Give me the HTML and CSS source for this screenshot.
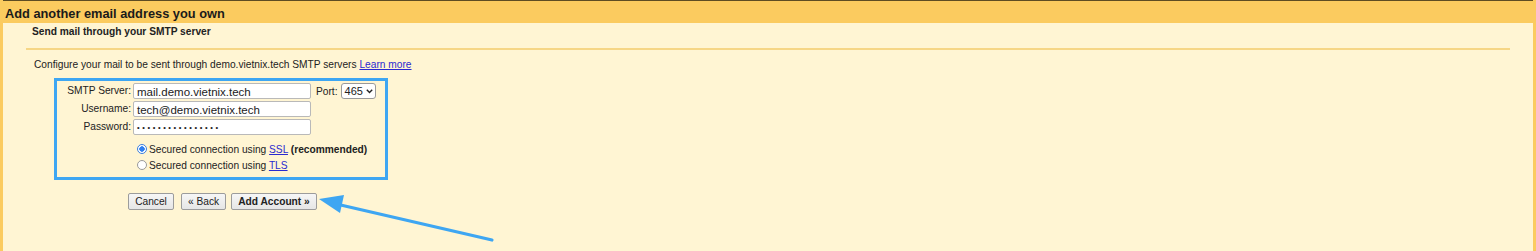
FILE: index.html
```html
<!DOCTYPE html>
<html>
<head>
<meta charset="utf-8">
<link rel="stylesheet" href="styles.css">
</head>
<body>
<div class="page">
  <div class="header">Add another email address you own</div>
  <div class="content">
    <div class="section-title">Send mail through your SMTP server</div>
    <div class="rule"></div>
    <div class="intro">Configure your mail to be sent through demo.vietnix.tech SMTP servers <a href="#" class="link">Learn more</a></div>
    <div class="highlight">
      <div class="form">
        <label class="lbl">SMTP Server:</label>
        <div class="row">
          <div class="input">mail.demo.vietnix.tech</div>
          <span class="port-lbl">Port:</span>
          <div class="select">465<svg class="chev" width="7" height="5" viewBox="0 0 7 5"><path d="M0.8 0.8 L3.5 3.6 L6.2 0.8" fill="none" stroke="#222" stroke-width="1.4"/></svg></div>
        </div>
        <label class="lbl">Username:</label>
        <div class="row"><div class="input">tech@demo.vietnix.tech</div></div>
        <label class="lbl">Password:</label>
        <div class="row"><div class="input pw">••••••••••••••••</div></div>
        <div></div>
        <div class="radios">
          <div class="radio-row"><span class="radio checked"></span><span class="rtext">Secured connection using <a href="#" class="link">SSL</a> <b>(recommended)</b></span></div>
          <div class="radio-row"><span class="radio"></span><span class="rtext">Secured connection using <a href="#" class="link">TLS</a></span></div>
        </div>
      </div>
    </div>
    <div class="buttons">
      <button class="btn">Cancel</button>
      <button class="btn back">« Back</button>
      <button class="btn strong">Add Account »</button>
    </div>
  </div>
  <svg class="arrow" width="200" height="60" viewBox="300 190 200 60">
    <line x1="492" y1="240" x2="332" y2="203" stroke="#3ea6f2" stroke-width="3.2" stroke-linecap="round"/>
    <polygon points="319,199 344,195 340,213" fill="#3ea6f2"/>
  </svg>
</div>
</body>
</html>
```
FILE: styles.css
```css
* { box-sizing: border-box; }
html, body { margin: 0; padding: 0; }
body {
  background: #fff5d3;
  font-family: "Liberation Sans", Arial, sans-serif;
  color: #222;
  font-size: 10px;
}
.page {
  position: relative;
  height: 251px;
  border-left: 3px solid #fbcb5f;
  border-right: 3px solid #fbcb5f;
  background: #fff5d3;
  overflow: hidden;
}
.header {
  height: 23px;
  background: #fbcb5f;
  border-top: 1px solid #5e4c22;
  padding: 6px 0 0 2px;
  font-weight: bold;
  font-size: 12.8px;
  line-height: 14px;
  color: #1a1a1a;
}
.content {
  padding-left: 23px;
}
.section-title {
  font-weight: bold;
  font-size: 10.2px;
  line-height: 12px;
  padding: 3px 0 0 6px;
  height: 25px;
}
.rule {
  width: 1484px;
  height: 2px;
  background: #f6d685;
}
.intro {
  padding: 9px 0 0 8px;
  height: 28px;
  font-size: 10.2px;
  line-height: 12px;
}
.link { color: #2a2ad0; text-decoration: underline; }
.highlight {
  margin-left: 28px;
  width: 334px;
  height: 102px;
  border: 3px solid #3ea6f2;
  padding: 2px 0 0 0;
}
.form {
  display: grid;
  grid-template-columns: 74px auto;
  row-gap: 2px;
  column-gap: 2px;
}
.lbl {
  text-align: right;
  font-size: 10.2px;
  line-height: 12px;
  padding-top: 2px;
  white-space: nowrap;
}
.row { display: flex; align-items: center; height: 16px; }
.input {
  width: 178px;
  height: 16px;
  background: #fff;
  border: 1px solid #b9b9b9;
  border-radius: 2px;
  padding: 1px 0 0 3px;
  font-size: 11.5px;
  line-height: 14px;
  color: #222;
  white-space: nowrap;
}
.input.pw { font-size: 7.5px; letter-spacing: 2.6px; line-height: 13px; padding-top: 1px; }
.port-lbl { margin-left: 5px; font-size: 10.2px; }
.select {
  margin-left: 3px;
  width: 35px;
  height: 16px;
  background: #fff;
  border: 1px solid #9a9a9a;
  border-radius: 3px;
  padding-left: 3px;
  display: flex;
  align-items: center;
  gap: 3px;
  font-size: 11px;
}
.radios { padding: 4px 0 0 4px; }
.radio-row {
  display: flex;
  align-items: center;
  height: 16px;
  font-size: 10.2px;
}
.rtext { white-space: nowrap; }
.radio-row b { font-weight: bold; }
.radio {
  width: 10px;
  height: 10px;
  border-radius: 50%;
  border: 1px solid #9a9a9a;
  background: #fff;
  margin-right: 2px;
  flex: none;
}
.radio.checked {
  border: 1px solid #3a7ee0;
  background: radial-gradient(circle, #2f7ff0 0 2.5px, #fff 3px);
  box-shadow: inset 0 0 0 1px #fff;
}
.buttons {
  display: flex;
  margin: 13px 0 0 102px;
}
.btn {
  height: 17px;
  padding: 0;
  font-family: "Liberation Sans", Arial, sans-serif;
  font-size: 10.2px;
  color: #222;
  background: linear-gradient(#f6f6f6, #e6e6e6);
  border: 1px solid #9c9c9c;
  border-radius: 2px;
  width: 46px;
}
.btn.back { width: 45px; margin-left: 7px; }
.btn.strong { font-weight: bold; width: 86px; margin-left: 5px; }
.arrow {
  position: absolute;
  left: 297px;
  top: 190px;
}
```
